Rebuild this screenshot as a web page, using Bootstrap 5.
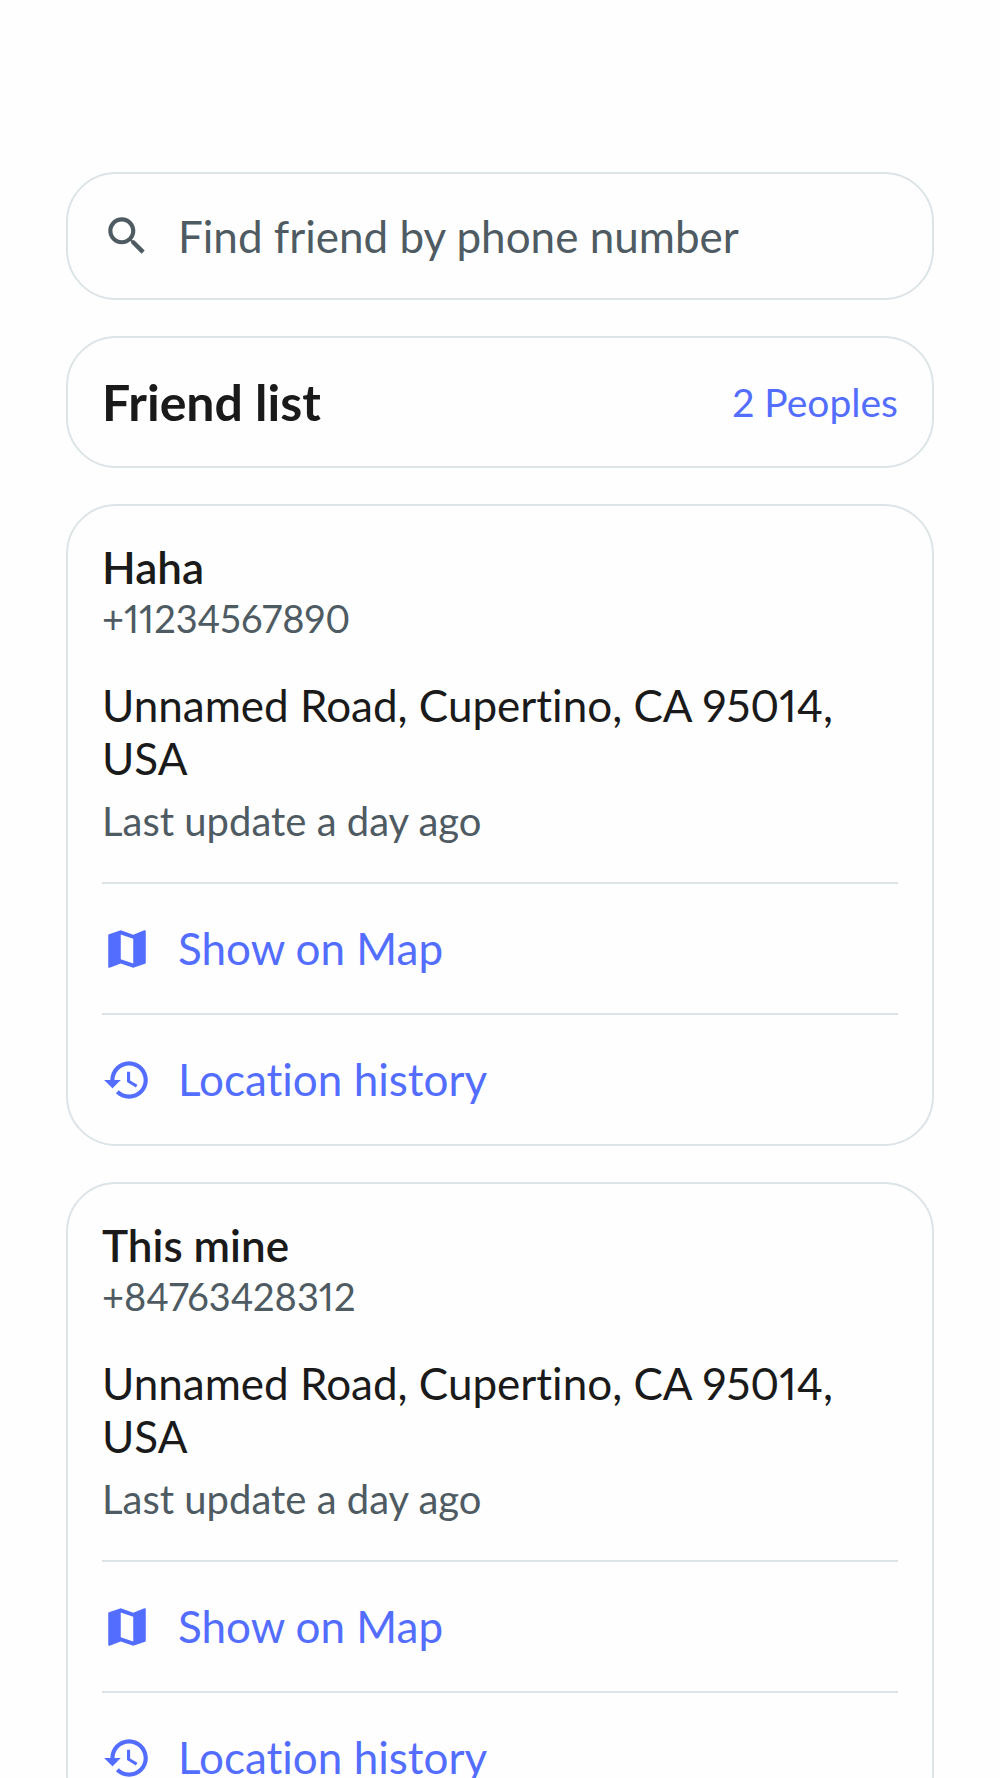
<!DOCTYPE html>
<html lang="en">
<head>
<meta charset="utf-8">
<meta name="viewport" content="width=device-width, initial-scale=1">
<title>Friend list</title>
<link href="https://cdn.jsdelivr.net/npm/bootstrap@5.3.0/dist/css/bootstrap.min.css" rel="stylesheet">
<style>
  :root { --ink: #1a1a1a; --muted: #4f5b62; --accent: #536dfe; --line: #dce4e7; }
  body { background: #fefefe; color: var(--ink); font-family: Lato, "Noto Sans", sans-serif; font-size: 44px; line-height: 53px; font-variant-ligatures: none; font-variant-numeric: proportional-nums; overflow-x: hidden; }
  .screen { padding: 172px 66px 36px; gap: 36px; }
  .panel { border: 2px solid var(--line); border-radius: 50px; padding: 0 34px; background: #fefefe; }
  .search-panel { height: 128px; gap: 26px; color: var(--muted); }
  .search-panel .form-control { font-size: 44px; line-height: 53px; color: var(--muted); }
  .search-panel .form-control::placeholder { color: var(--muted); opacity: 1; }
  .title-panel { height: 132px; }
  .list-title { font-size: 50px; line-height: 58px; font-weight: 700; }
  .people-count { font-size: 39px; line-height: 48px; color: var(--accent); }
  .friend-info { padding: 34px 0 37px; }
  .friend-name { font-size: 44px; line-height: 54px; font-weight: 600; }
  .meta-text { font-size: 40px; line-height: 48px; color: var(--muted); }
  .phone-text { font-size: 38px; line-height: 49px; }
  .address { margin: 36px 0 12px; }
  .action-row { height: 131px; gap: 26px; border-top: 2px solid var(--line); color: var(--accent); }
  .glyph { width: 50px; height: 50px; fill: currentColor; }
</style>
</head>
<body>
<svg class="d-none" xmlns="http://www.w3.org/2000/svg">
  <symbol id="map" viewBox="0 0 24 24"><path d="M20.5 3l-.16.03L15 5.100 9 3 3.360 4.900c-.21.070-.36.250-.36.480V20.500c0 .280.220.500.500.500l.160-.030L9 18.900l6 2.100 5.640-1.900c.210-.070.360-.250.360-.480V3.500c0-.280-.220-.500-.500-.500zM15 19l-6-2.110V5l6 2.110V19z"/></symbol>
  <symbol id="history" viewBox="0 0 24 24"><path d="M13 3c-4.970 0-9 4.030-9 9H1l3.890 3.890.070.140L9 12H6c0-3.870 3.130-7 7-7s7 3.130 7 7-3.130 7-7 7c-1.930 0-3.680-.790-4.940-2.060l-1.420 1.420C8.270 19.990 10.510 21 13 21c4.970 0 9-4.030 9-9s-4.030-9-9-9zm-1 5v5l4.280 2.540.720-1.210-3.500-2.080V8H12z"/></symbol>
</svg>
<main class="screen d-flex flex-column">
  <form class="panel search-panel d-flex align-items-center" role="search">
    <label for="phone" class="d-flex flex-shrink-0" aria-label="Find friend by phone number">
      <svg class="glyph" viewBox="0 0 24 24" aria-hidden="true"><path d="M15.500 14h-.790l-.280-.270C15.410 12.590 16 11.110 16 9.500 16 5.910 13.090 3 9.500 3S3 5.910 3 9.500 5.910 16 9.500 16c1.610 0 3.090-.590 4.230-1.570l.270.280v.790l5 4.990L20.490 19l-4.990-5zm-6 0C7.010 14 5 11.990 5 9.500S7.010 5 9.500 5 14 7.010 14 9.500 11.990 14 9.500 14z"/></svg>
    </label>
    <input id="phone" type="tel" class="form-control border-0 shadow-none bg-transparent p-0" placeholder="Find friend by phone number">
  </form>

  <header class="panel title-panel d-flex align-items-center justify-content-between">
    <h1 class="list-title m-0">Friend list</h1>
    <span class="people-count">2 Peoples</span>
  </header>

  <article class="panel">
    <div class="friend-info">
      <h2 class="friend-name m-0">Haha</h2>
      <div class="meta-text phone-text">+11234567890</div>
      <p class="address">Unnamed Road, Cupertino, CA 95014, USA</p>
      <div class="meta-text">Last update a day ago</div>
    </div>
    <a href="#" class="action-row d-flex align-items-center text-decoration-none"><svg class="glyph" aria-hidden="true"><use href="#map"/></svg>Show on Map</a>
    <a href="#" class="action-row d-flex align-items-center text-decoration-none"><svg class="glyph" aria-hidden="true"><use href="#history"/></svg>Location history</a>
  </article>

  <article class="panel">
    <div class="friend-info">
      <h2 class="friend-name m-0">This mine</h2>
      <div class="meta-text phone-text">+84763428312</div>
      <p class="address">Unnamed Road, Cupertino, CA 95014, USA</p>
      <div class="meta-text">Last update a day ago</div>
    </div>
    <a href="#" class="action-row d-flex align-items-center text-decoration-none"><svg class="glyph" aria-hidden="true"><use href="#map"/></svg>Show on Map</a>
    <a href="#" class="action-row d-flex align-items-center text-decoration-none"><svg class="glyph" aria-hidden="true"><use href="#history"/></svg>Location history</a>
  </article>
</main>
<script src="https://cdn.jsdelivr.net/npm/bootstrap@5.3.0/dist/js/bootstrap.bundle.min.js"></script>
</body>
</html>
